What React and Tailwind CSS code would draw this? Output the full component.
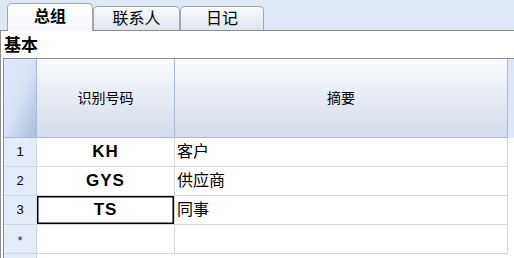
export default function App() {
  const font = { fontFamily: '"Liberation Sans", "Noto Sans CJK SC", sans-serif' };
  const rows = [
    { n: "1", code: "KH", name: "客户" },
    { n: "2", code: "GYS", name: "供应商" },
    { n: "3", code: "TS", name: "同事", sel: true },
    { n: "*", code: "", name: "", star: true },
  ];
  return (
    <div className="w-[514px] h-[258px] overflow-hidden bg-[#dfe8f6] flex flex-col text-black" style={font}>
      {/* tabs */}
      <div className="h-[30px] flex items-end pl-[7px] shrink-0">
        <div className="w-[86px] h-[28px] rounded-t-[5px] border border-b-0 border-[#a5a5a5] bg-gradient-to-b from-white to-[#f6f8fb] flex items-center justify-center text-[16px] font-bold leading-none pb-[2px] relative top-[1px] z-10">
          总组
        </div>
        <div className="w-[87px] h-[24px] rounded-t-[5px] border border-b-0 border-[#a5a5a5] bg-gradient-to-b from-[#f8fafc] to-[#dfe6ef] flex items-center justify-center text-[16px] leading-none">
          联系人
        </div>
        <div className="w-[84px] h-[24px] rounded-t-[5px] border border-b-0 border-[#a5a5a5] bg-gradient-to-b from-[#f8fafc] to-[#dfe6ef] flex items-center justify-center text-[16px] leading-none">
          日记
        </div>
      </div>
      {/* panel */}
      <div className="flex-1 bg-white border-t border-l border-[#8e8e8e] flex flex-col">
        <div className="h-[27px] shrink-0 flex items-center pl-[3px] pt-[2px] text-[17px] font-bold leading-none">基本</div>
        <div className="flex-1 ml-[2px] border-l border-t border-[#8e8e8e] flex flex-col">
          {/* header */}
          <div className="flex h-[79px] shrink-0">
            <div className="w-[33px] shrink-0 border-r border-b border-[#a7bbd6] bg-gradient-to-br from-[#e0e9f8] via-[#d8e3f5] to-[#a9bdd8]" />
            <div className="w-[138px] shrink-0 border-r border-b border-[#a7bbd6] bg-gradient-to-b from-[#f8fafc] to-[#d5dcea] flex items-center justify-center text-[14px]">
              识别号码
            </div>
            <div className="w-[333px] shrink-0 border-r border-b border-[#a7bbd6] bg-gradient-to-b from-[#f8fafc] to-[#d5dcea] flex items-center justify-center text-[14px]">
              摘要
            </div>
            <div className="flex-1 bg-[#dde7f7]" />
          </div>
          {rows.map((r) => (
            <div key={r.n} className="flex h-[29px] shrink-0">
              <div className="w-[33px] shrink-0 border-r border-b border-[#c9d6e8] bg-[#e4ecf7] flex items-center justify-center text-[13px]">
                {r.star ? <span className="text-[#333] text-[13px] pt-[4px]">*</span> : r.n}
              </div>
              <div
                className={
                  "w-[138px] shrink-0 border-r border-b border-[#d5d5d5] flex items-center justify-center text-[17px] font-bold tracking-[1px] " +
                  (r.sel ? "shadow-[inset_0_0_0_1.5px_#000]" : "")
                }
              >
                {r.code}
              </div>
              <div className="w-[333px] shrink-0 border-r border-b border-[#d5d5d5] flex items-center pl-[2px] text-[16px]">
                {r.name}
              </div>
              <div className="flex-1" />
            </div>
          ))}
          <div className="flex flex-1">
            <div className="w-[33px] shrink-0 border-r border-[#c9d6e8] bg-[#e4ecf7]" />
          </div>
        </div>
      </div>
    </div>
  );
}
